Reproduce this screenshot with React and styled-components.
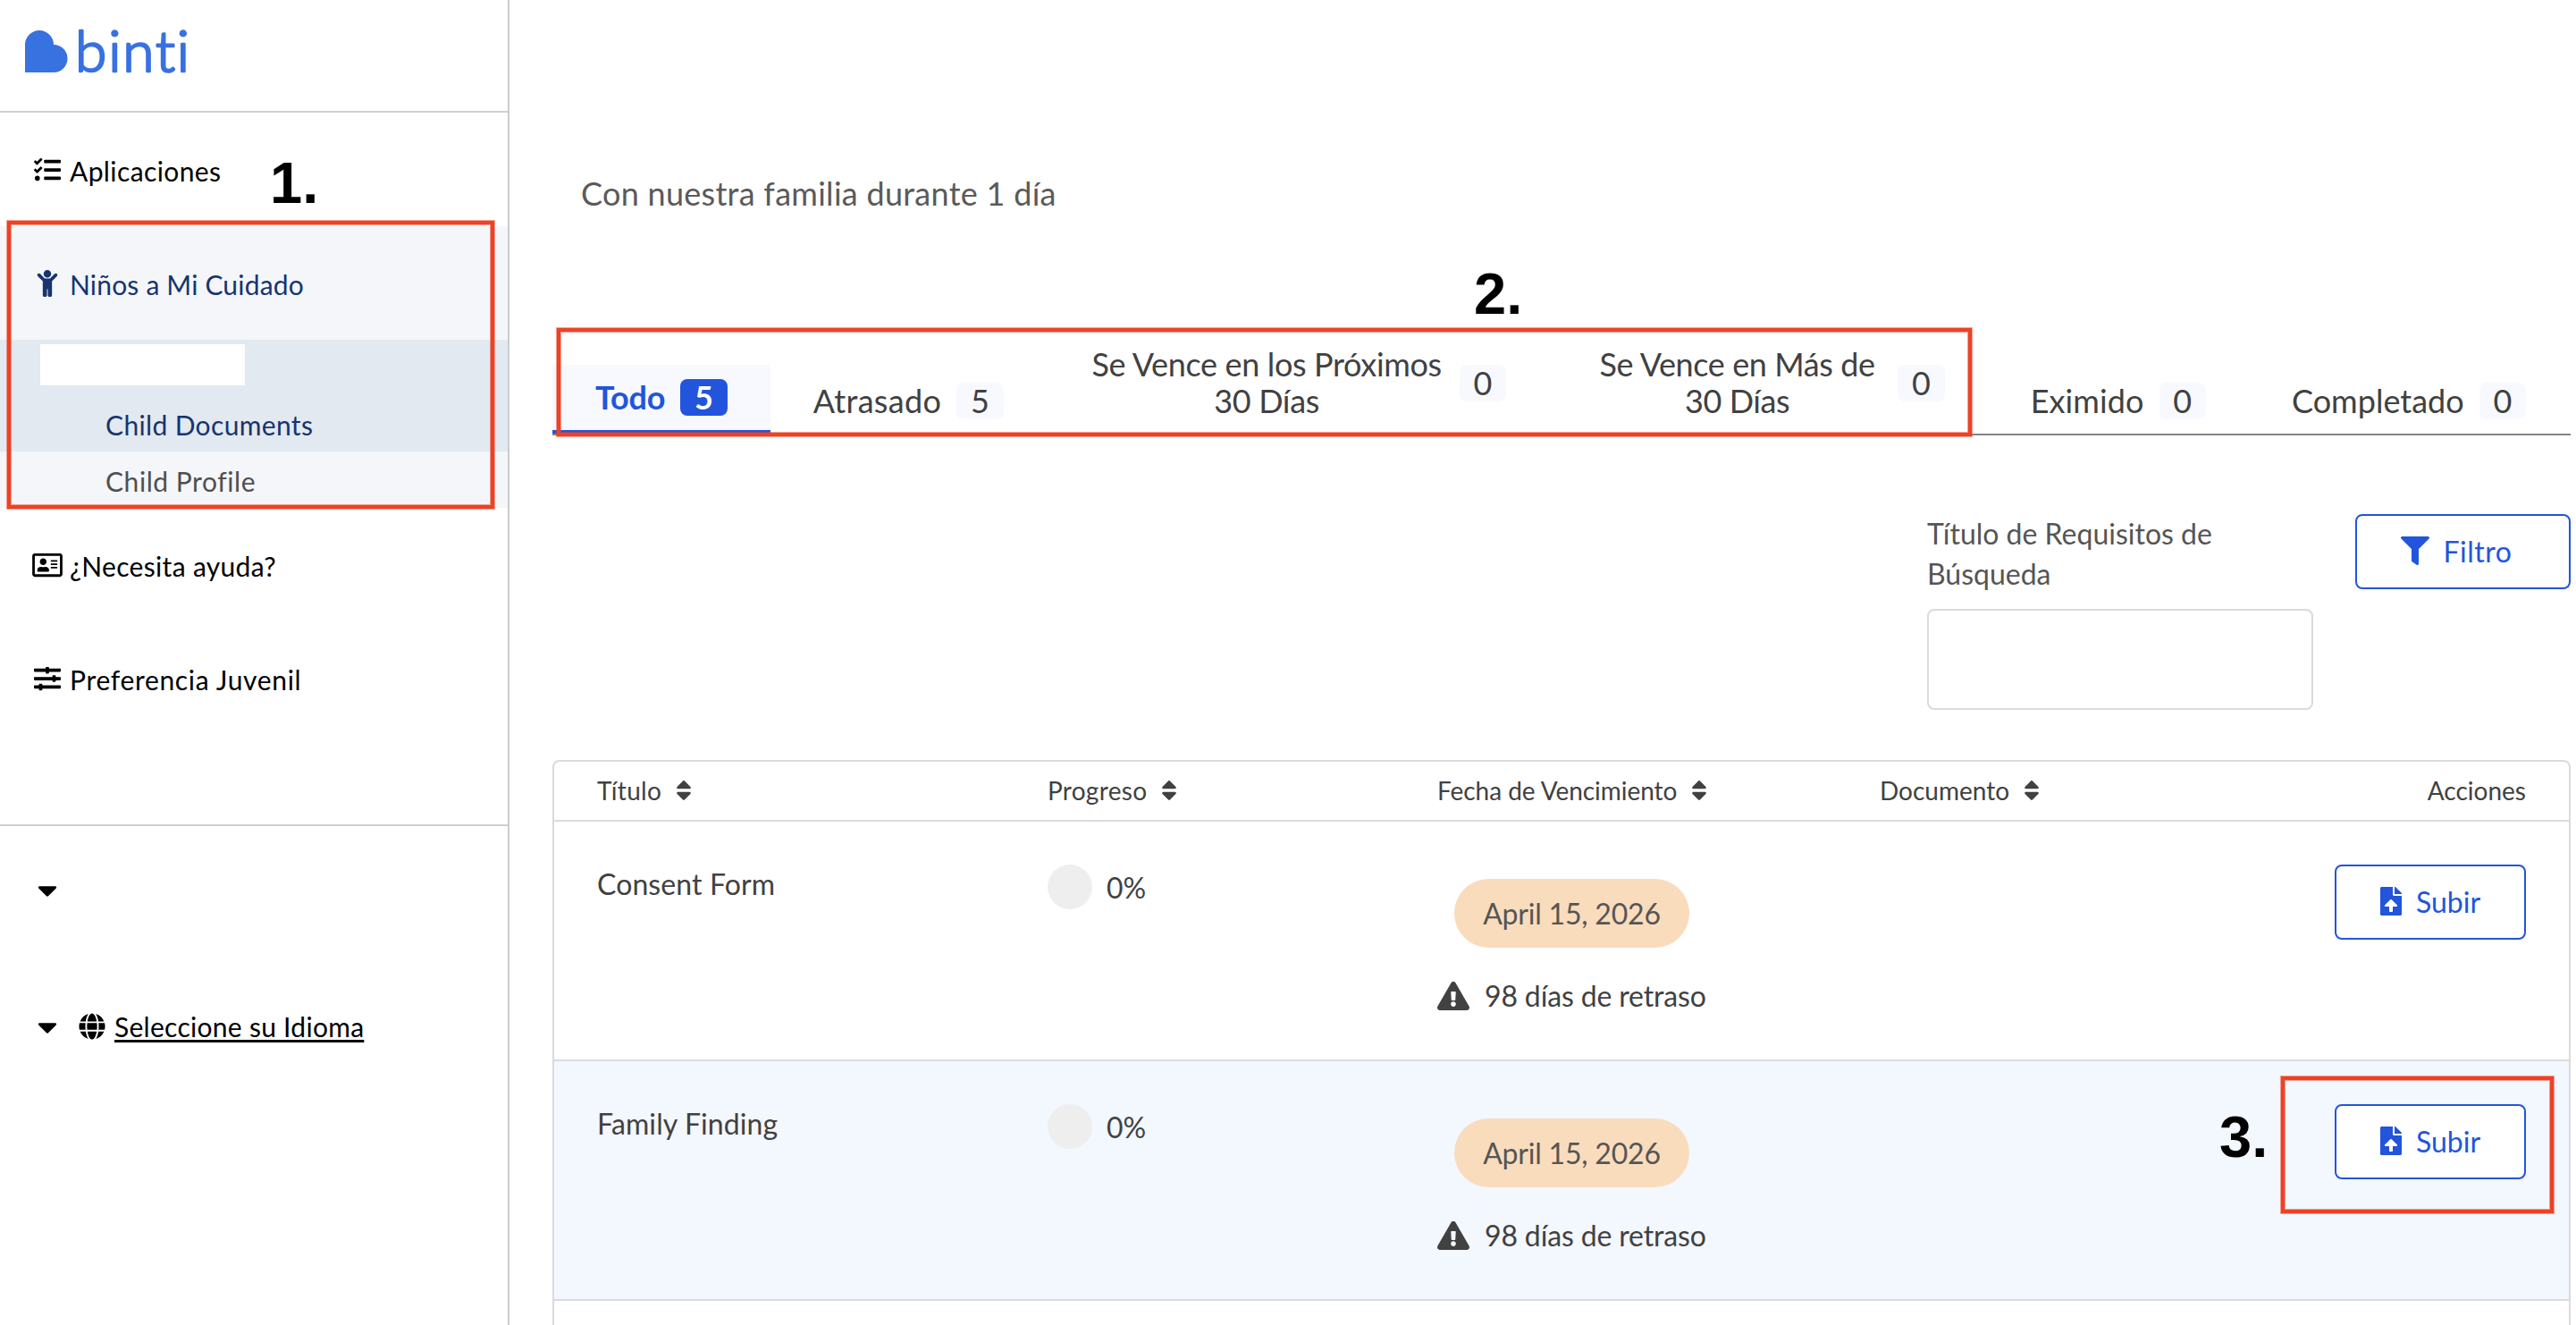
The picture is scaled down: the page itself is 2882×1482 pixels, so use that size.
import React from 'react';
import styled, { createGlobalStyle } from 'styled-components';
import {
  FaTasks,
  FaChild,
  FaRegAddressCard,
  FaSlidersH,
  FaCaretDown,
  FaGlobe,
  FaFilter,
  FaSort,
  FaExclamationTriangle,
  FaFileUpload,
} from 'react-icons/fa';

const GlobalStyle = createGlobalStyle`
  * {
    box-sizing: border-box;
  }

  body {
    margin: 0;
    background: #fff;
    color: #414141;
    font-family: Lato, sans-serif;
    font-size: 32px;
  }

  svg {
    display: block;
    flex-shrink: 0;
  }
`;

const Page = styled.div`
  position: relative;
  display: flex;
  width: 2882px;
  height: 1482px;
  overflow: hidden;
`;

/* ---------- sidebar ---------- */

const Sidebar = styled.aside`
  width: 570px;
  flex-shrink: 0;
  border-right: 2px solid #ccc;
  color: #000;
  font-size: 30px;
`;

const LogoBar = styled.div`
  height: 126px;
  padding: 10px 0 0 28px;
  border-bottom: 2px solid #d0d0d0;
`;

const NavList = styled.nav`
  height: 798px;
  border-bottom: 2px solid #d0d0d0;
`;

const NavItem = styled.a`
  display: flex;
  align-items: center;
  height: 127px;
  padding-left: 36px;
  background: ${props => (props.$active ? '#f4f6fa' : 'transparent')};
  color: ${props => (props.$active ? '#17346f' : '#000')};
`;

const NavIcon = styled.span`
  display: flex;
  justify-content: center;
  width: 34px;
  margin-right: 8px;
`;

const NavLabel = styled.span`
  padding-top: 2px;
  letter-spacing: ${props => props.$spacing || 0}px;
`;

const ChildGroup = styled.div`
  height: 125px;
  padding: 5px 0 0 45px;
  background: #e2e9f0;
`;

const ChildName = styled.div`
  width: 229px;
  height: 46px;
  background: #fff;
`;

const ChildLink = styled.a`
  display: flex;
  align-items: center;
  height: 63px;
  padding: 3px 0 0 118px;
  background: ${props => (props.$active ? 'transparent' : '#f4f6fa')};
  color: ${props => (props.$active ? '#17346f' : '#4f4f4f')};
  letter-spacing: ${props => (props.$active ? 0.35 : 0.55)}px;

  ${ChildGroup} & {
    margin-top: 11px;
    padding-left: 73px;
  }
`;

const FooterItem = styled.div`
  display: flex;
  align-items: center;
  height: 153px;
  padding: 0 0 11px 42px;
`;

const LanguageLink = styled.a`
  display: flex;
  align-items: center;
  gap: 10px;
  margin-left: 24px;
  letter-spacing: 0.28px;

  span {
    text-decoration: underline;
    text-decoration-thickness: 3px;
    text-underline-offset: 3px;
  }
`;

/* ---------- main ---------- */

const Main = styled.main`
  flex: 1;
  min-width: 0;
  padding: 193px 6px 0 48px;
`;

const Subtitle = styled.p`
  margin: 0 0 0 32px;
  color: #5a5a5a;
  font-size: 36px;
  line-height: 46px;
  letter-spacing: 0.28px;
`;

const Tabs = styled.div`
  display: flex;
  align-items: flex-end;
  height: 133px;
  margin-top: 115px;
  border-bottom: 2px solid #848484;
`;

const Tab = styled.div`
  display: flex;
  align-items: center;
  gap: 17px;
  flex-shrink: 0;
  padding: 16px 48px;
  font-size: 36px;
  line-height: 41px;
  text-align: center;
  color: ${props => (props.$active ? '#2255dc' : '#414141')};
  background: ${props => (props.$active ? '#f8f9ff' : 'transparent')};
  border-bottom: ${props => (props.$active ? '4px solid #2255dc' : 'none')};
  font-weight: ${props => (props.$active ? 700 : 400)};
`;

const TabLabel = styled.span`
  width: ${props => (props.$width ? `${props.$width}px` : 'auto')};
  letter-spacing: ${props => props.$spacing || 0}px;
`;

const Count = styled.span`
  width: 52.5px;
  height: 41px;
  border-radius: 8px;
  background: ${props => (props.$active ? '#2255dc' : '#f8f9ff')};
  color: ${props => (props.$active ? '#fff' : '#414141')};
`;

const Toolbar = styled.div`
  display: flex;
  justify-content: flex-end;
  align-items: flex-start;
  gap: 47px;
  height: 363px;
  padding-top: 88px;
`;

const SearchField = styled.label`
  width: 432px;
  margin-top: -14px;
  padding-top: 13px;
  color: #555;
  line-height: 45px;
`;

const SearchInput = styled.input`
  display: block;
  width: 100%;
  height: 113px;
  margin-top: 17px;
  border: 2px solid #dadae0;
  border-radius: 8px;
  background: #fff;
`;

const Button = styled.button`
  display: flex;
  align-items: center;
  justify-content: center;
  gap: 16px;
  width: ${props => props.$width}px;
  height: 84px;
  padding: 0 0 2px;
  border: 2px solid #2255dc;
  border-radius: 8px;
  background: #fff;
  color: #2255dc;
  font-family: inherit;
  font-size: 32px;
`;

const FilterButton = styled(Button)`
  padding-right: 15px;
  letter-spacing: 0.5px;
`;

const Table = styled.div`
  height: 700px;
  border: 2px solid #dadae0;
  border-radius: 8px 8px 0 0;
`;

const Row = styled.div`
  display: grid;
  grid-template-columns: 504px 436px 495px 1fr auto;
  align-items: start;
  height: 268px;
  padding: 48px 48px 0;
  border-bottom: 2px solid #dadae0;
  background: ${props => (props.$striped ? '#f3f7fe' : '#fff')};
`;

const HeaderRow = styled(Row)`
  height: 67px;
  padding: 0 48px 2px;
  align-items: center;
  border-radius: 8px 8px 0 0;
  font-size: 28px;
`;

const HeaderCell = styled.div`
  display: flex;
  align-items: center;
  gap: 16px;
  letter-spacing: ${props => props.$spacing || 0}px;
`;

const Title = styled.div`
  padding-top: 2px;
  line-height: 40px;
  letter-spacing: 0.1px;
`;

const Progress = styled.div`
  display: flex;
  align-items: center;
  gap: 16px;
`;

const ProgressDot = styled.span`
  width: 50px;
  height: 50px;
  border-radius: 50%;
  background: #eee;
`;

const DatePill = styled.div`
  display: flex;
  align-items: center;
  justify-content: center;
  width: 263px;
  height: 77px;
  margin: 16px 0 0 19px;
  border-radius: 39px;
  background: #f9dcbc;
  color: #555;
  letter-spacing: -0.2px;
`;

const Overdue = styled.div`
  display: flex;
  align-items: center;
  gap: 17px;
  margin-top: 34px;
  letter-spacing: -0.15px;
`;

/* ---------- step markers ---------- */

const Highlight = styled.div`
  position: absolute;
  left: ${props => props.$x}px;
  top: ${props => props.$y}px;
  width: ${props => props.$w}px;
  height: ${props => props.$h}px;
  border: 4px solid #ee4125;
  box-shadow: 0 0 0 1px rgba(238, 65, 37, 0.5), inset 0 0 0 1px rgba(238, 65, 37, 0.5);
`;

const Step = styled.div`
  position: absolute;
  left: ${props => props.$x}px;
  top: ${props => props.$y}px;
  color: #000;
  font-family: 'Liberation Sans', sans-serif;
  font-size: 65px;
  font-weight: 700;
  line-height: 66px;
`;

const tabs = [
  { label: 'Todo', count: 5, active: true, spacing: -0.2 },
  { label: 'Atrasado', count: 5, spacing: 0.3 },
  { label: 'Se Vence en los Próximos 30 Días', count: 0, width: 397, spacing: -0.35 },
  { label: 'Se Vence en Más de 30 Días', count: 0, width: 325, spacing: -0.4 },
  { label: 'Eximido', count: 0, spacing: 0.1 },
  { label: 'Completado', count: 0 },
];

const columns = [
  { label: 'Título', spacing: 0.3 },
  { label: 'Progreso', spacing: 0.3 },
  { label: 'Fecha de Vencimiento', spacing: -0.05 },
  { label: 'Documento' },
];

const documents = [
  { title: 'Consent Form', progress: '0%', due: 'April 15, 2026', overdue: '98 días de retraso' },
  { title: 'Family Finding', progress: '0%', due: 'April 15, 2026', overdue: '98 días de retraso' },
];

const LogoText = styled.text`
  font-family: Lato, sans-serif;
  font-size: 64px;
  font-weight: 300;
  font-variant-ligatures: none;
  stroke: #3871e0;
  stroke-width: 2.6px;
  stroke-linejoin: round;
`;

const Logo = () => (
  <svg width="220" height="100" viewBox="0 -20 220 100" fill="#3871e0">
    <path d="M0 51V20a16 16 0 0 1 32 0a15.5 15.5 0 0 1 0 31z" />
    <LogoText x="56" y="50" textLength="128">
      binti
    </LogoText>
  </svg>
);

const App = () => {
  return (
    <Page>
      <GlobalStyle />
      <Sidebar>
        <LogoBar>
          <Logo />
        </LogoBar>
        <NavList>
          <NavItem>
            <NavIcon><FaTasks size={30} /></NavIcon>
            <NavLabel $spacing={0.4}>Aplicaciones</NavLabel>
          </NavItem>
          <NavItem $active>
            <NavIcon><FaChild size={30} /></NavIcon>
            <NavLabel $spacing={0.18}>Niños a Mi Cuidado</NavLabel>
          </NavItem>
          <ChildGroup>
            <ChildName />
            <ChildLink $active>Child Documents</ChildLink>
          </ChildGroup>
          <ChildLink>Child Profile</ChildLink>
          <NavItem>
            <NavIcon><FaRegAddressCard size={30} style={{ width: 34 }} /></NavIcon>
            <NavLabel $spacing={0.33}>¿Necesita ayuda?</NavLabel>
          </NavItem>
          <NavItem>
            <NavIcon><FaSlidersH size={30} /></NavIcon>
            <NavLabel $spacing={0.67}>Preferencia Juvenil</NavLabel>
          </NavItem>
        </NavList>
        <FooterItem>
          <FaCaretDown size={35} style={{ width: 22 }} />
        </FooterItem>
        <FooterItem>
          <FaCaretDown size={35} style={{ width: 22 }} />
          <LanguageLink>
            <FaGlobe size={30} />
            <span>Seleccione su Idioma</span>
          </LanguageLink>
        </FooterItem>
      </Sidebar>

      <Main>
        <Subtitle>Con nuestra familia durante 1 día</Subtitle>
        <Tabs>
          {tabs.map(tab => (
            <Tab key={tab.label} $active={tab.active}>
              <TabLabel $width={tab.width} $spacing={tab.spacing}>{tab.label}</TabLabel>
              <Count $active={tab.active}>{tab.count}</Count>
            </Tab>
          ))}
        </Tabs>
        <Toolbar>
          <SearchField>
            Título de Requisitos de Búsqueda
            <SearchInput />
          </SearchField>
          <FilterButton $width={241}>
            <FaFilter size={32} />
            Filtro
          </FilterButton>
        </Toolbar>
        <Table>
          <HeaderRow>
            {columns.map(column => (
              <HeaderCell key={column.label} $spacing={column.spacing}>
                {column.label}
                <FaSort size={28} style={{ width: 18 }} />
              </HeaderCell>
            ))}
            <HeaderCell>Acciones</HeaderCell>
          </HeaderRow>
          {documents.map((doc, index) => (
            <Row key={doc.title} $striped={index % 2 === 1}>
              <Title>{doc.title}</Title>
              <Progress>
                <ProgressDot />
                {doc.progress}
              </Progress>
              <div>
                <DatePill>{doc.due}</DatePill>
                <Overdue>
                  <FaExclamationTriangle size={32} style={{ width: 36 }} />
                  {doc.overdue}
                </Overdue>
              </div>
              <div />
              <Button $width={214}>
                <FaFileUpload size={32} style={{ width: 24 }} />
                Subir
              </Button>
            </Row>
          ))}
        </Table>
      </Main>

      <Highlight $x={8} $y={247} $w={545} $h={322} />
      <Highlight $x={623} $y={367} $w={1583} $h={121} />
      <Highlight $x={2552} $y={1204} $w={305} $h={153} />
      <Step $x={302} $y={172}>1.</Step>
      <Step $x={1649} $y={296}>2.</Step>
      <Step $x={2483} $y={1239}>3.</Step>
    </Page>
  );
};

export default App;
